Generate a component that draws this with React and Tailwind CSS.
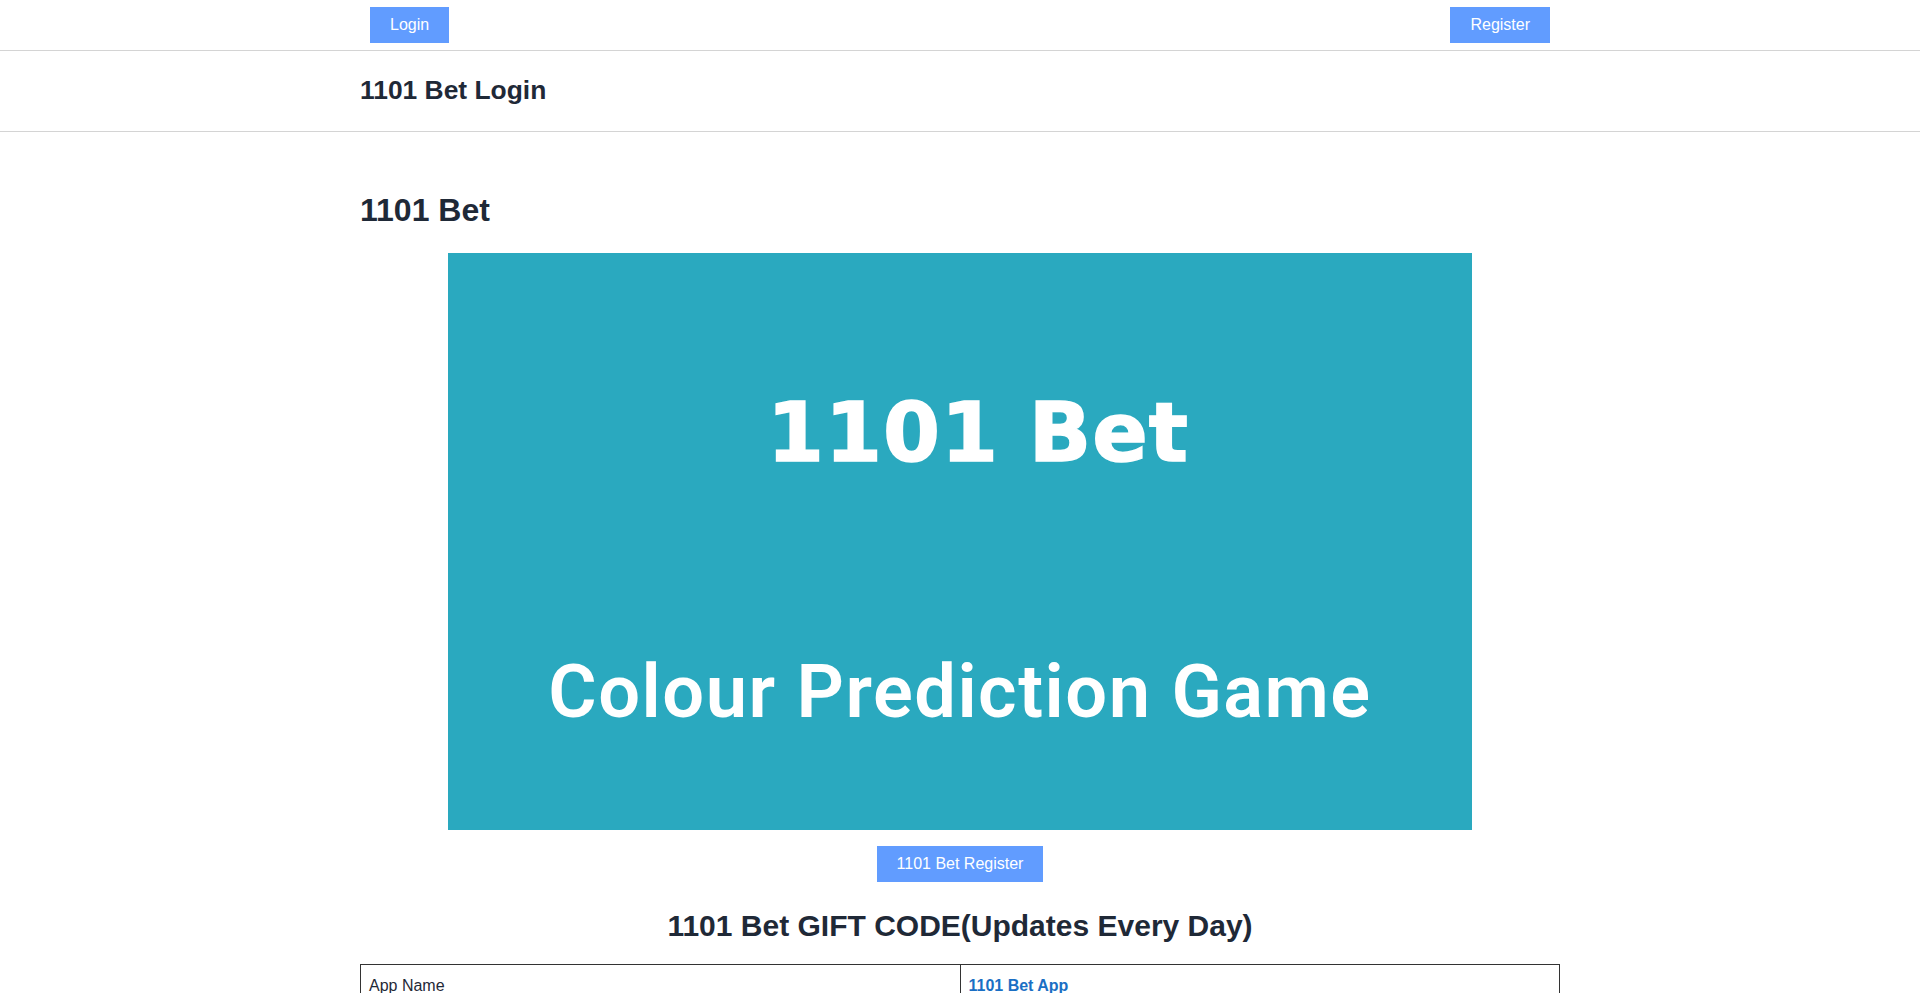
import React from 'react';

const rows = [
  { label: 'App Name', value: '1101 Bet App', link: true },
  { label: 'Gift Code', value: 'Updated Daily', link: false },
  { label: 'Bonus', value: 'Up to ₹500', link: false },
  { label: 'Minimum Recharge', value: '₹100', link: false },
  { label: 'Minimum Withdrawal', value: '₹110', link: false },
];

const Button = ({ children }) => (
  <button className="h-[36px] px-5 bg-[#619cff] text-white text-base leading-none">
    {children}
  </button>
);

const Banner = () => (
  <div className="w-[1024px] h-[577px] mx-auto bg-[#2aa9bf] flex flex-col items-center text-white">
    <div
      className="pt-[139px] pl-[36px] text-[82px] leading-none font-bold tracking-[1px] [-webkit-text-stroke:1.5px_white]"
      style={{ fontFamily: '"DejaVu Sans", sans-serif' }}
    >
      1101 Bet
    </div>
    <div
      className="mt-[181px] text-[74px] leading-none font-semibold tracking-[1.5px]"
      style={{ fontFamily: 'Roboto, sans-serif' }}
    >
      Colour Prediction Game
    </div>
  </div>
);

export default function App() {
  return (
    <div className="min-h-screen bg-white text-[#1f2937] font-['Liberation_Sans',Arial,sans-serif]">
      {/* Top nav */}
      <header className="border-b border-[#d4d4d4]">
        <div className="w-[1200px] mx-auto px-[10px] py-[7px] flex items-center justify-between">
          <Button>Login</Button>
          <Button>Register</Button>
        </div>
      </header>

      {/* Site title */}
      <div className="border-b border-[#d4d4d4]">
        <div className="w-[1200px] mx-auto h-[80px] flex items-center">
          <h2 className="text-[26.4px] font-bold leading-tight -mt-[2px]">1101 Bet Login</h2>
        </div>
      </div>

      {/* Main */}
      <main className="w-[1200px] mx-auto pt-[40px] pb-10">
        <h1 className="text-[32px] font-bold leading-[1.2] mt-[19px] mb-[24px]">1101 Bet</h1>

        <Banner />

        <div className="mt-[16px] flex justify-center">
          <Button>1101 Bet Register</Button>
        </div>

        <h2 className="text-[30px] font-bold leading-[35px] text-center mt-[26px] mb-[21px]">
          1101 Bet GIFT CODE(Updates Every Day)
        </h2>

        <table className="w-full border-collapse border border-[#333]">
          <tbody>
            {rows.map((r) => (
              <tr key={r.label}>
                <td className="w-1/2 border border-[#333] px-2 pt-[9px] pb-[7px] text-base leading-6">{r.label}</td>
                <td className="w-1/2 border border-[#333] px-2 pt-[9px] pb-[7px] text-base leading-6">
                  {r.link ? (
                    <a href="#" className="text-[#1a6fc4] font-bold">{r.value}</a>
                  ) : (
                    r.value
                  )}
                </td>
              </tr>
            ))}
          </tbody>
        </table>
      </main>
    </div>
  );
}
